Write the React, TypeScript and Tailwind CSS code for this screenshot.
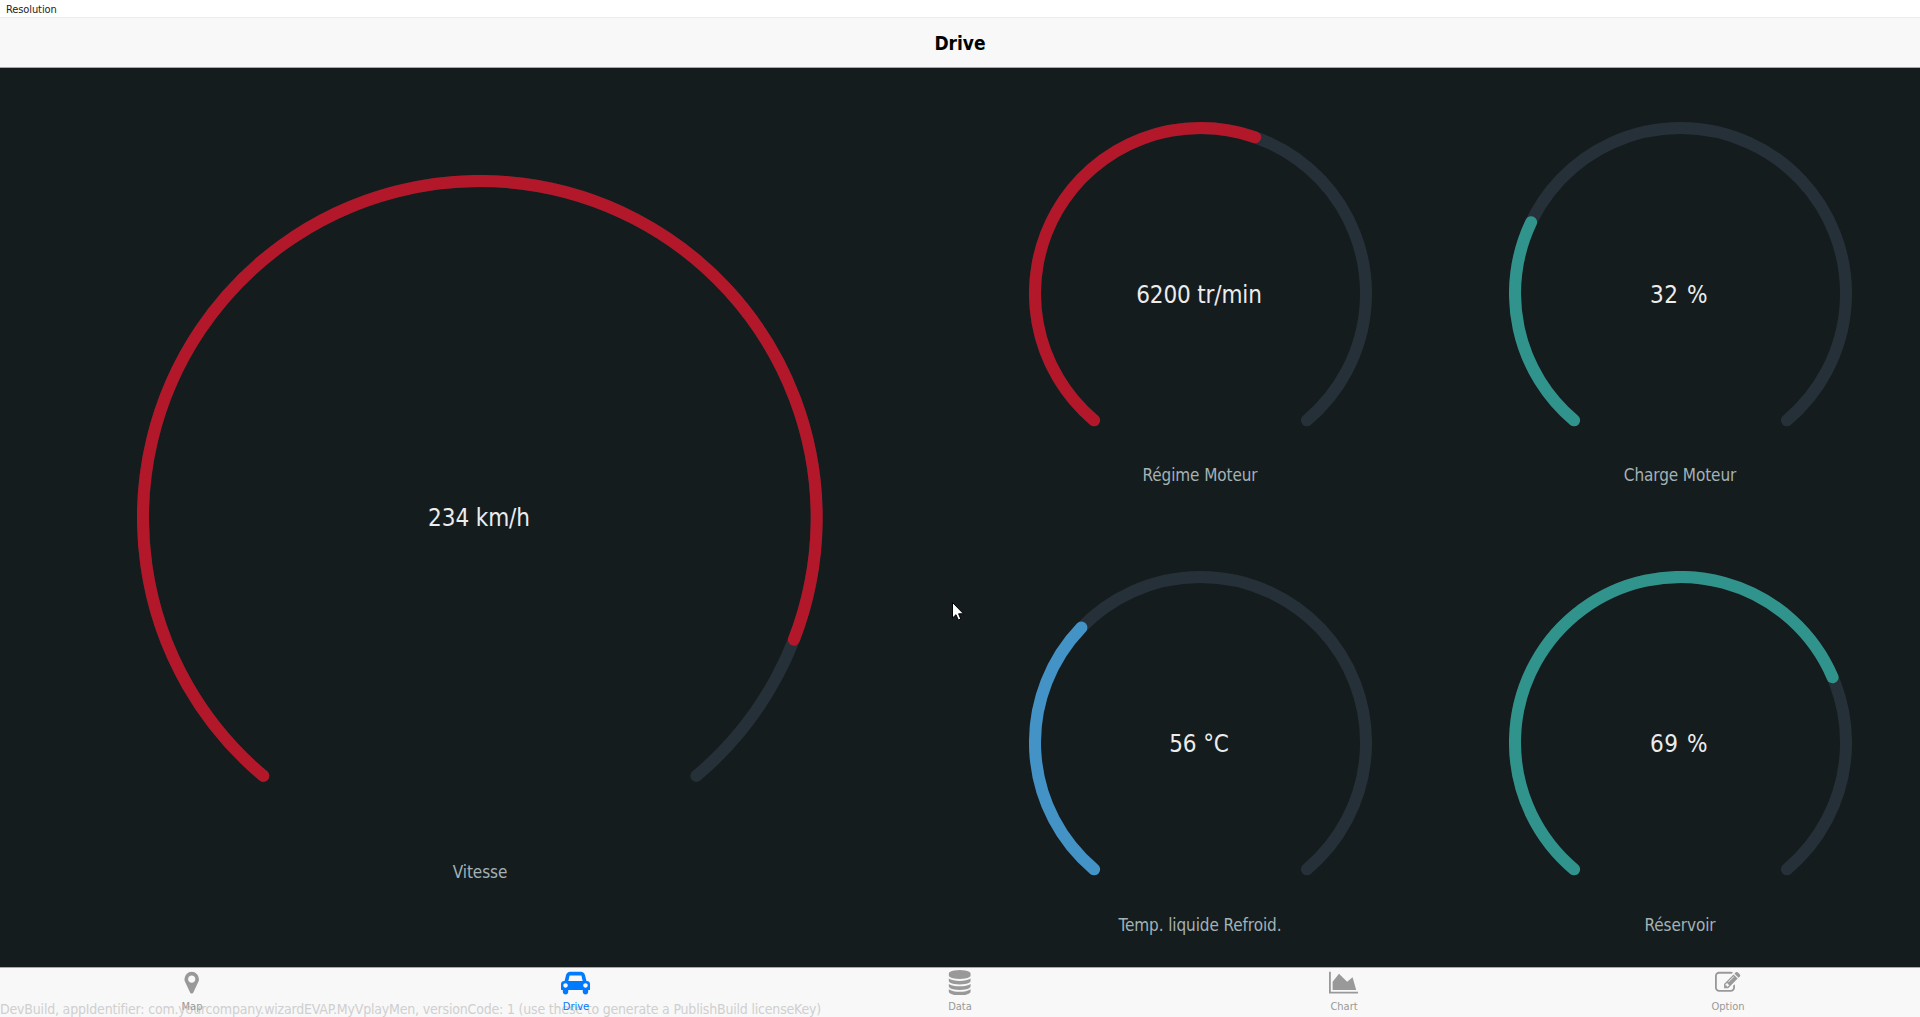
type GaugeProps = {
  label: string;
  value: string;
  sweep: number;
  color: string;
  size: number;
  labelClass: string;
  valueClass: string;
  className?: string;
};

const START = -140;
const RANGE = 280;

function arc(radius: number, sweep: number) {
  const point = (deg: number) => {
    const a = (deg * Math.PI) / 180;
    return `${(radius * Math.sin(a)).toFixed(3)} ${(-radius * Math.cos(a)).toFixed(3)}`;
  };
  return `M${point(START)}A${radius} ${radius} 0 ${sweep > 180 ? 1 : 0} 1 ${point(START + sweep)}`;
}

function Gauge({ label, value, sweep, color, size, labelClass, valueClass, className = '' }: GaugeProps) {
  const r = size / 2 - 6;
  return (
    <section className={`grid min-h-0 grid-cols-1 grid-rows-1 place-items-center ${className}`}>
      <svg
        className="[grid-area:1/1]"
        width={size}
        height={size}
        viewBox={`${-size / 2} ${-size / 2} ${size} ${size}`}
        fill="none"
        strokeWidth={12}
        strokeLinecap="round"
      >
        <path d={arc(r, RANGE)} stroke="#263038" />
        <path d={arc(r, sweep)} stroke={color} />
      </svg>
      <span className={`pr-0.5 text-2xl leading-8 text-[#ececec] [grid-area:1/1] ${valueClass}`}>{value}</span>
      <span
        className={`self-end text-[17px] leading-6 tracking-[-0.1px] text-[#a3b2b6] [grid-area:1/1] ${labelClass}`}
      >
        {label}
      </span>
    </section>
  );
}

const TABS = [
  {
    name: 'Map',
    width: 1792,
    d: 'M1152 640q0-106-75-181t-181-75-181 75-75 181 75 181 181 75 181-75 75-181zm256 0q0 109-33 179l-364 774q-16 33-47.5 52t-67.5 19-67.5-19-46.5-52l-365-774q-33-70-33-179 0-212 150-362t362-150 362 150 150 362z',
  },
  {
    name: 'Drive',
    width: 2048,
    active: true,
    d: 'M480 1088q0-66-47-113t-113-47-113 47-47 113 47 113 113 47 113-47 47-113zm36-320h1016l-89-357q-2-8-14-17.5t-21-9.5h-768q-9 0-21 9.5t-14 17.5zm1372 320q0-66-47-113t-113-47-113 47-47 113 47 113 113 47 113-47 47-113zm160-96v384q0 14-9 23t-23 9h-96v128q0 80-56 136t-136 56-136-56-56-136v-128h-1024v128q0 80-56 136t-136 56-136-56-56-136v-128h-96q-14 0-23-9t-9-23v-384q0-93 65.5-158.5t158.5-65.5h28l105-419q23-94 104-157.5t179-63.5h768q98 0 179 63.5t104 157.5l105 419h28q93 0 158.5 65.5t65.5 158.5z',
  },
  {
    name: 'Data',
    width: 1792,
    d: 'M896 768q237 0 443-43t325-127v170q0 69-103 128t-280 93.5-385 34.5-385-34.5-280-93.5-103-128v-170q119 84 325 127t443 43zm0 768q237 0 443-43t325-127v170q0 69-103 128t-280 93.5-385 34.5-385-34.5-280-93.5-103-128v-170q119 84 325 127t443 43zm0-384q237 0 443-43t325-127v170q0 69-103 128t-280 93.5-385 34.5-385-34.5-280-93.5-103-128v-170q119 84 325 127t443 43zm0-1152q208 0 385 34.5t280 93.5 103 128v128q0 69-103 128t-280 93.5-385 34.5-385-34.5-280-93.5-103-128v-128q0-69 103-128t280-93.5 385-34.5z',
  },
  {
    name: 'Chart',
    width: 2048,
    d: 'M2048 1536v128h-2048v-1536h128v1408h1920zm-384-1024l256 896h-1664v-576l448-576 576 576z',
  },
  {
    name: 'Option',
    width: 1792,
    d: 'M888 1184l116-116-152-152-116 116v56h96v96h56zm440-720q-16-16-33 1l-350 350q-17 17-1 33t33-1l350-350q17-17 1-33zm80 594v190q0 119-84.5 203.5t-203.5 84.5h-832q-119 0-203.5-84.5t-84.5-203.5v-832q0-119 84.5-203.5t203.5-84.5h832q63 0 117 25 15 7 18 23 3 17-9 29l-49 49q-14 14-32 8-23-6-45-6h-832q-66 0-113 47t-47 113v832q0 66 47 113t113 47h832q66 0 113-47t47-113v-126q0-13 9-22l64-64q15-15 35-7t20 29zm-96-738l288 288-672 672h-288v-288zm444 132l-92 92-288-288 92-92q28-28 68-28t68 28l152 152q28 28 28 68t-28 68z',
  },
];

const ICON_SCALE = 25.4 / 1792;

export default function App() {
  return (
    <div className="relative flex h-[1017px] w-[1920px] flex-col overflow-hidden bg-[#151c1e] font-['DejaVu_Sans_Condensed','DejaVu_Sans',sans-serif]">
      <div className="h-[17px] shrink-0 bg-white pl-1.5 text-[11px] leading-5 tracking-[-0.1px] text-[#222]">
        Resolution
      </div>
      <header className="h-[51px] shrink-0 border-t border-b border-t-[#ececec] border-b-[#a9abab] bg-[#f8f8f8] text-center text-[19px] leading-[50px] font-bold text-black">
        Drive
      </header>

      <main className="grid min-h-0 flex-1 grid-cols-[2fr_1fr_1fr] grid-rows-[450px_1fr]">
        <Gauge className="row-span-2" label="Vitesse" value="234 km/h" sweep={251.2} color="#b21829" size={685.7} valueClass="tracking-[-0.1px]" labelClass="mb-[83px]" />
        <Gauge label="Régime Moteur" value="6200 tr/min" sweep={159.3} color="#b21829" size={343} valueClass="pt-[3px] tracking-[-0.15px]" labelClass="mb-[31px]" />
        <Gauge label="Charge Moteur" value="32 %" sweep={75.5} color="#31948c" size={343} valueClass="pt-[3px] tracking-[0.6px] [word-spacing:0.8px]" labelClass="mb-[31px]" />
        <Gauge label="Temp. liquide Refroid." value="56 °C" sweep={94} color="#4393c7" size={343} valueClass="pt-[3px] tracking-[-0.1px]" labelClass="mb-[30px]" />
        <Gauge label="Réservoir" value="69 %" sweep={206.8} color="#31948c" size={343} valueClass="pt-[3px] tracking-[0.6px] [word-spacing:0.8px]" labelClass="mb-[30px]" />
      </main>

      <nav className="relative grid h-[50px] shrink-0 grid-cols-5 border-t border-[#a9abab] bg-[#f8f8f8]">
        <span className="absolute bottom-0 left-0 text-sm leading-4 tracking-[-0.19px] whitespace-nowrap text-[#cfcfcf]">
          DevBuild, appIdentifier: com.yourcompany.wizardEVAP.MyVplayMen, versionCode: 1 (use these to generate a PublishBuild licenseKey)
        </span>
        {TABS.map((tab) => (
          <div
            key={tab.name}
            className={`relative flex flex-col items-center pt-0.5 ${tab.active ? 'text-[#007aff]' : 'text-[#999]'}`}
          >
            <svg
              className="shrink-0"
              width={tab.width * ICON_SCALE}
              height={25.4}
              viewBox={`0 0 ${tab.width} 1792`}
              fill="currentColor"
            >
              <path d={tab.d} />
            </svg>
            <span className="mt-1 text-[11px] leading-4">{tab.name}</span>
          </div>
        ))}
      </nav>

      <svg className="absolute top-[602px] left-[952px]" width="12" height="19" viewBox="0 0 12 19">
        <path d="M.5 .5V16L4 12.7L6.3 18L8.8 17L6.6 11.8H11.5Z" fill="#fff" stroke="#000" strokeWidth="1" />
      </svg>
    </div>
  );
}
